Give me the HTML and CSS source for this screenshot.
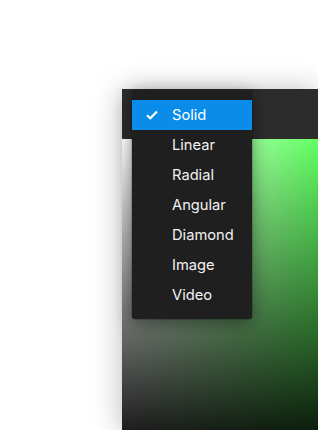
FILE: index.html
```html
<!DOCTYPE html>
<html lang="en">
<head>
  <meta charset="UTF-8" />
  <meta name="viewport" content="width=device-width, initial-scale=1.0" />
  <title>Fill type</title>
  <link rel="stylesheet" href="styles.css">
</head>
<body>
  <div class="panel">
    <div class="panel-header"></div>
    <div class="picker"></div>

    <ul class="menu">
      <li class="menu-item selected">
        <svg class="check" width="12" height="10" viewBox="0 0 12 10"><path d="M1 5.2 L4.3 8.3 L11 1.5" fill="none" stroke="#fff" stroke-width="2.2"/></svg>
        Solid
      </li>
      <li class="menu-item">Linear</li>
      <li class="menu-item">Radial</li>
      <li class="menu-item">Angular</li>
      <li class="menu-item">Diamond</li>
      <li class="menu-item">Image</li>
      <li class="menu-item">Video</li>
    </ul>
  </div>
</body>
</html>
```

FILE: styles.css
```css
html, body {
  margin: 0;
  height: 100%;
  overflow: hidden;
}
body {
  background: #fff;
  font-family: Inter, "Noto Sans", sans-serif;
  padding: 89px 0 0 122px;
  box-sizing: border-box;
  display: flex;
}
.panel {
  position: relative;
  flex: 1;
  display: flex;
  flex-direction: column;
  background: #2c2c2c;
  box-shadow: 0 2px 28px rgba(0, 0, 0, 0.28);
}
.panel-header {
  height: 50px;
  background: #2c2c2c;
}
.picker {
  flex: 1;
  background:
    linear-gradient(to top, #000, rgba(0, 0, 0, 0)) 0 0 / 294px 330px no-repeat,
    linear-gradient(to right, #fff, #14ff14) 0 0 / 294px 330px no-repeat;
}
.menu {
  position: absolute;
  top: 2px;
  left: 10px;
  width: 120px;
  margin: 0;
  padding: 9px 0;
  list-style: none;
  background: #1f1f1f;
  border-radius: 3px;
  box-shadow: 0 4px 18px rgba(0, 0, 0, 0.45), 0 0 0 1px rgba(0, 0, 0, 0.15);
}
.menu-item {
  position: relative;
  height: 30px;
  line-height: 30px;
  padding-left: 40px;
  font-size: 14.7px;
  color: #f2f2f2;
}
.menu-item.selected {
  background: #0c8ce9;
  color: #fff;
}
.check {
  position: absolute;
  left: 14px;
  top: 10px;
}
```
